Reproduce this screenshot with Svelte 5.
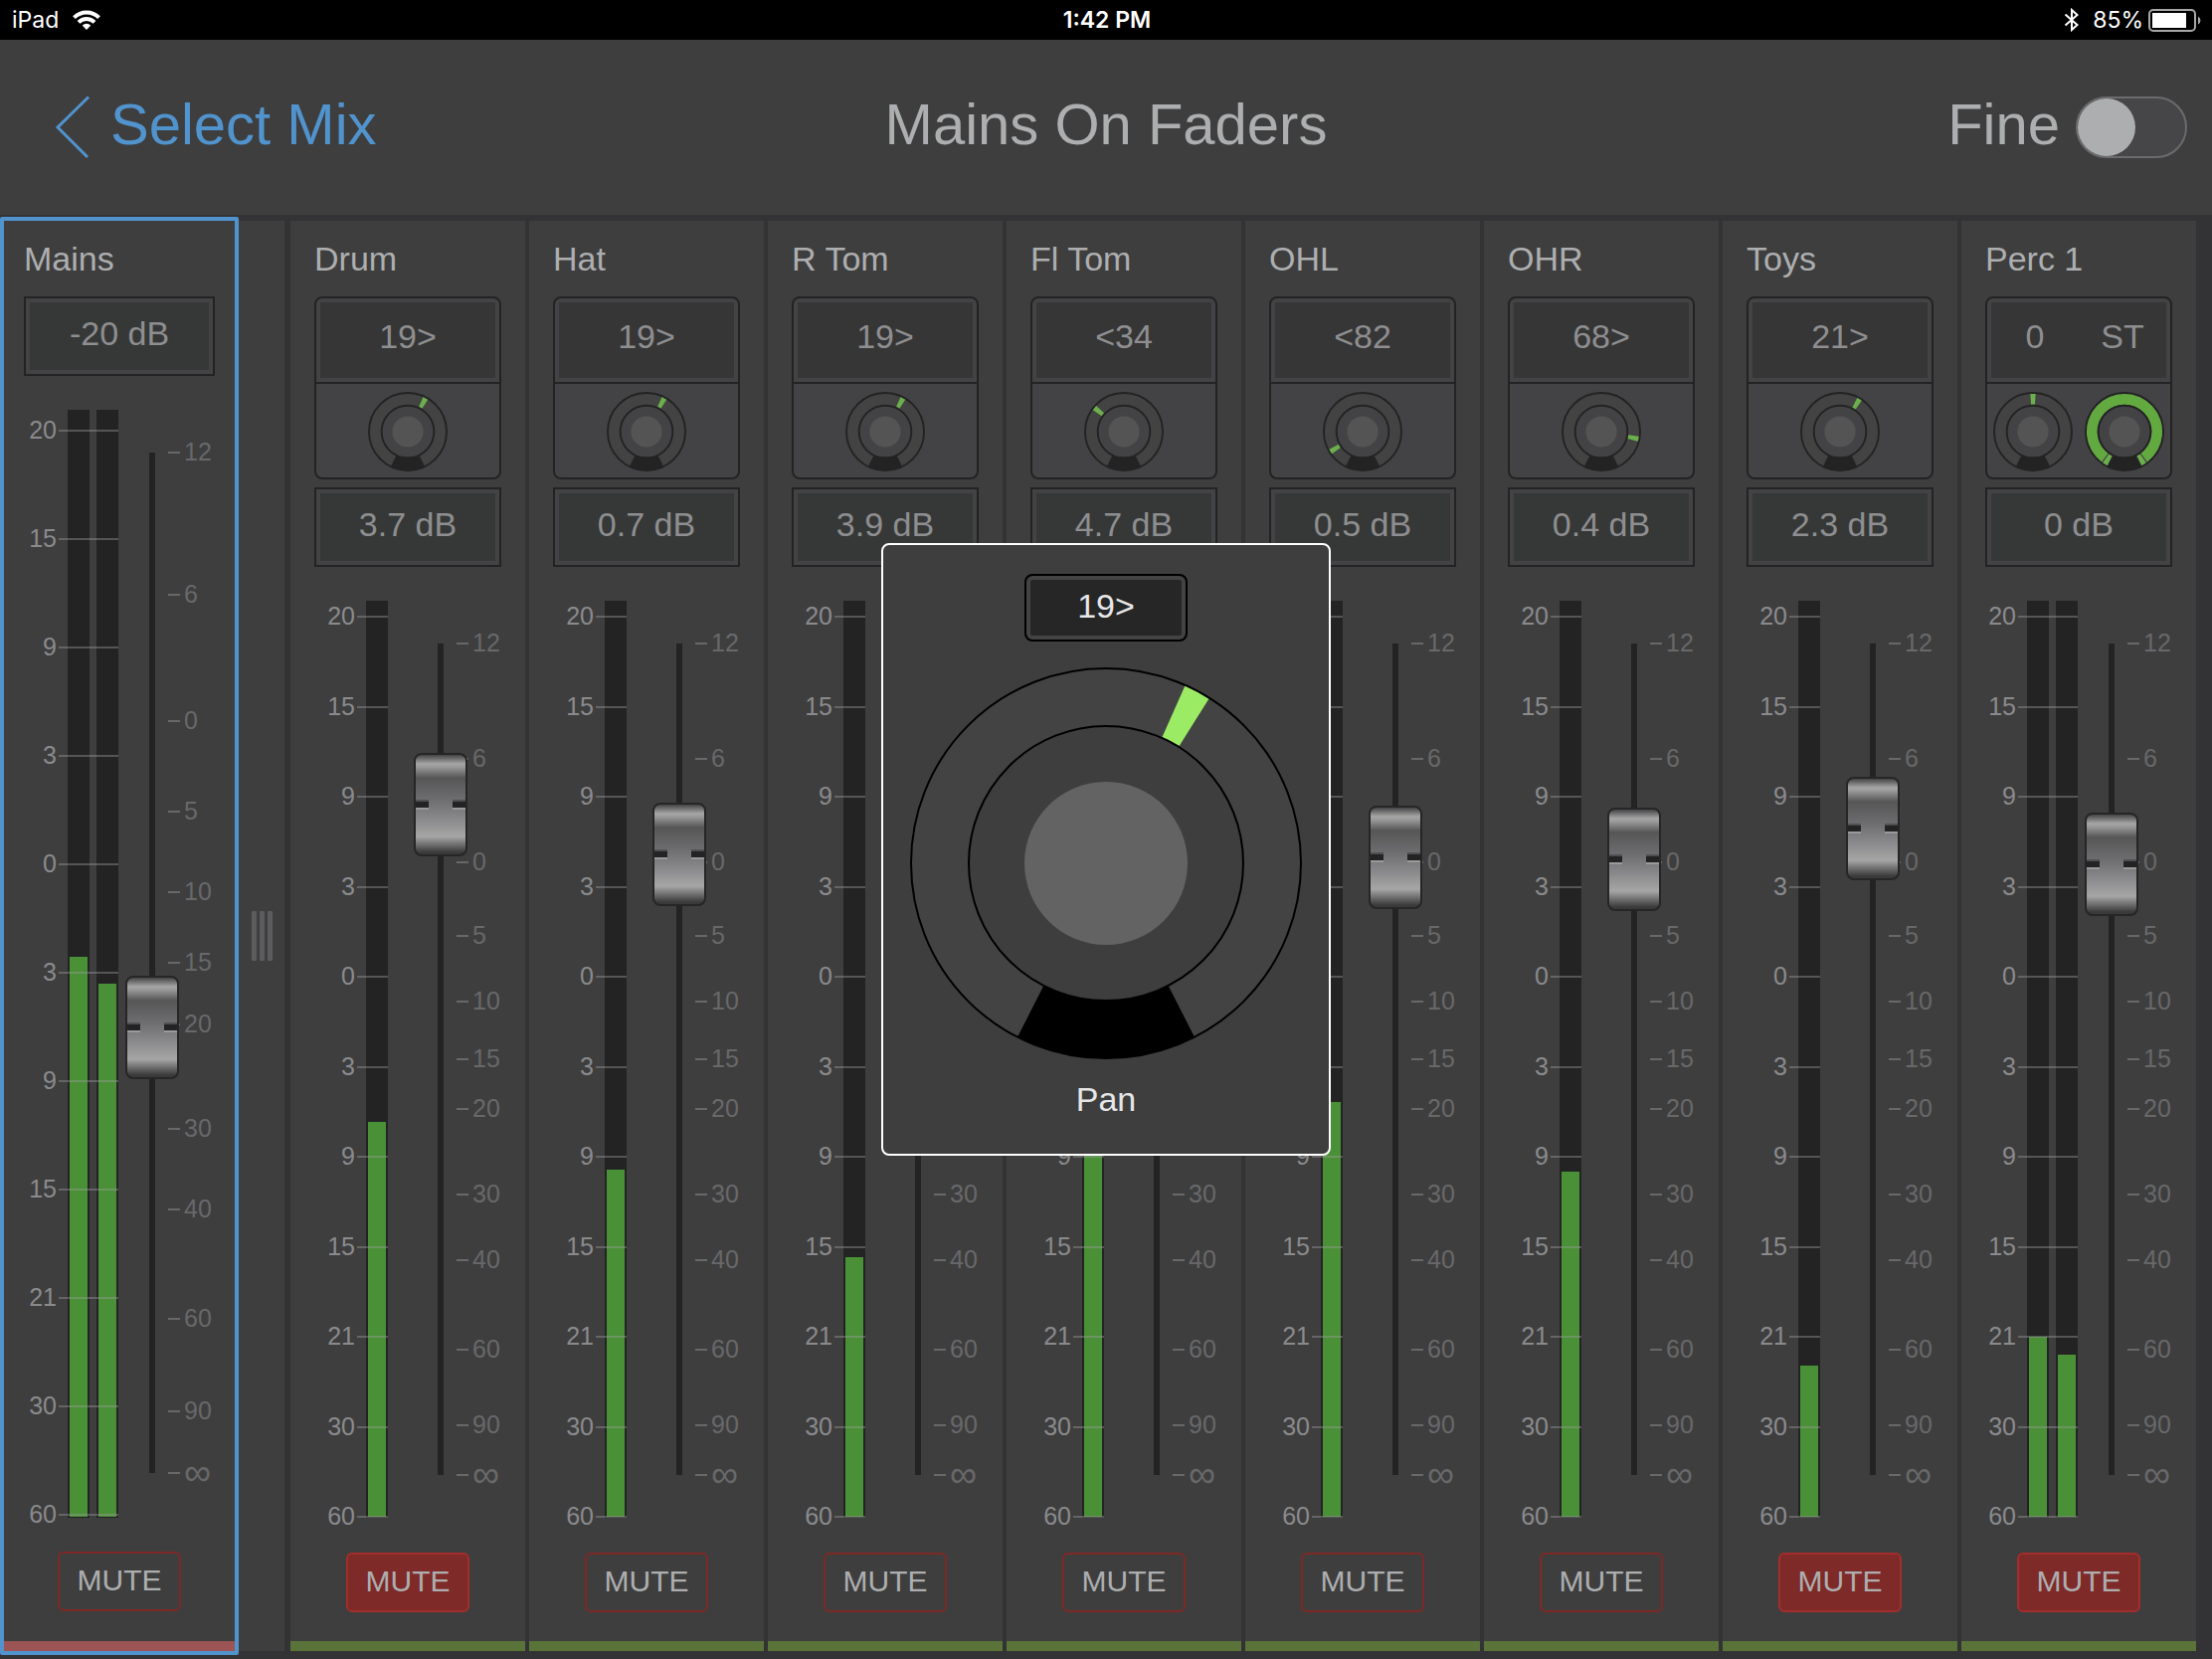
<script lang="ts">
  type Knob = { text: string; angle: number; spread?: boolean };
  type Strip = {
    name: string;
    gain: string;
    knobs: Knob[];
    levels: number[];
    fader: number;
    muted: boolean;
  };

  const meterMarks = ['20', '15', '9', '3', '0', '3', '9', '15', '21', '30', '60'];

  // label and the distance to the next mark, in thousandths of the travel
  const faderMarks = [
    { label: '12', grow: 139 },
    { label: '6', grow: 124 },
    { label: '0', grow: 89 },
    { label: '5', grow: 79 },
    { label: '10', grow: 69 },
    { label: '15', grow: 60 },
    { label: '20', grow: 103 },
    { label: '30', grow: 79 },
    { label: '40', grow: 107 },
    { label: '60', grow: 91 },
    { label: '90', grow: 60 },
    { label: '∞', grow: 0 }
  ];

  let mains = $state<Strip>({
    name: 'Mains', gain: '-20 dB', knobs: [], levels: [50.6, 48.2], fader: 437, muted: false
  });

  let strips = $state<Strip[]>([
    { name: 'Drum', gain: '3.7 dB', knobs: [{ text: '19>', angle: 28 }], levels: [43.1], fader: 806, muted: true },
    { name: 'Hat', gain: '0.7 dB', knobs: [{ text: '19>', angle: 28 }], levels: [37.9], fader: 746, muted: false },
    { name: 'R Tom', gain: '3.9 dB', knobs: [{ text: '19>', angle: 28 }], levels: [28.3], fader: 809, muted: false },
    { name: 'Fl Tom', gain: '4.7 dB', knobs: [{ text: '<34', angle: -51 }], levels: [50], fader: 824, muted: false },
    { name: 'OHL', gain: '0.5 dB', knobs: [{ text: '<82', angle: -122 }], levels: [45.3], fader: 743, muted: false },
    { name: 'OHR', gain: '0.4 dB', knobs: [{ text: '68>', angle: 101 }], levels: [37.7], fader: 741, muted: false },
    { name: 'Toys', gain: '2.3 dB', knobs: [{ text: '21>', angle: 31 }], levels: [16.5], fader: 778, muted: true },
    {
      name: 'Perc 1',
      gain: '0 dB',
      knobs: [{ text: '0', angle: 0 }, { text: 'ST', angle: 149, spread: true }],
      levels: [19.7, 17.7],
      fader: 734,
      muted: true
    }
  ]);

  let fine = $state(false);

  function point(r: number, deg: number) {
    const a = (deg * Math.PI) / 180;
    return `${(r * Math.sin(a)).toFixed(2)} ${(-r * Math.cos(a)).toFixed(2)}`;
  }

  function wedge(inner: number, outer: number, from: number, to: number) {
    const large = to - from > 180 ? 1 : 0;
    return `M${point(outer, from)}A${outer} ${outer} 0 ${large} 1 ${point(outer, to)}L${point(inner, to)}A${inner} ${inner} 0 ${large} 0 ${point(inner, from)}Z`;
  }
</script>

{#snippet dial(knob: Knob)}
  <svg class="dial" viewBox="-41 -41 82 82" aria-hidden="true">
    <circle class="ring" r="40" />
    {#if knob.spread}
      <path class="spread" d={wedge(28, 39, -143, 143)} />
      <path class="pointer" d={wedge(28, 39, -153, -145)} />
      <path class="pointer" d={wedge(28, 39, 145, 153)} />
    {:else}
      <path class="pointer" d={wedge(28, 39, knob.angle - 4, knob.angle + 4)} />
    {/if}
    <path class="stop" d={wedge(27, 40, 154, 206)} />
    <circle class="core" r="27" />
    <circle class="cap" r="16" />
  </svg>
{/snippet}

{#snippet channel(strip: Strip, main: boolean)}
  <section class="strip" class:main aria-label={strip.name}>
    <h2>{strip.name}</h2>

    {#if strip.knobs.length}
      <div class="pan">
        <div class="pan-values">
          {#each strip.knobs as knob}<span>{knob.text}</span>{/each}
        </div>
        <div class="pan-dials">
          {#each strip.knobs as knob}{@render dial(knob)}{/each}
        </div>
      </div>
    {/if}

    <output class="gain">{strip.gain}</output>

    <div class="console">
      <div class="meter" class:stereo={strip.levels.length > 1}>
        <div class="bars">
          {#each strip.levels as level}
            <div class="bar"><div class="level" style="height: {level}%"></div></div>
          {/each}
        </div>
        <div class="marks">
          {#each meterMarks as mark}
            <div class="mark"><span>{mark}</span></div>
          {/each}
        </div>
      </div>

      <input class="fader" type="range" min="0" max="1000" aria-label="{strip.name} level" bind:value={strip.fader} />

      <div class="scale">
        {#each faderMarks as mark}
          <div class="step" style="flex-grow: {mark.grow}">
            <span class:infinity={mark.label === '∞'}>{mark.label}</span>
          </div>
        {/each}
      </div>
    </div>

    <button class="mute" class:muted={strip.muted} aria-pressed={strip.muted} onclick={() => (strip.muted = !strip.muted)}>
      MUTE
    </button>
    <div class="colour"></div>
  </section>
{/snippet}

<div class="screen">
  <div class="status">
    <div class="status-side">
      <span>iPad</span>
      <svg width="28" height="20" viewBox="0 0 28 20" aria-hidden="true">
        <g fill="none" stroke="#fff" stroke-width="4">
          <path d="M1.5 7.6a17.8 17.8 0 0 1 25 0" />
          <path d="M6 12.4a11.4 11.4 0 0 1 16 0" />
        </g>
        <path d="M14 20l-4.3-4.6a6.2 6.2 0 0 1 8.6 0z" fill="#fff" />
      </svg>
    </div>
    <strong>1:42 PM</strong>
    <div class="status-side end">
      <svg class="bluetooth" width="16" height="24" viewBox="0 0 16 24" aria-hidden="true">
        <path d="M1.500 6.500l12 10.500L8 22V2l5.500 5L1.500 17.500" fill="none" stroke="#fff" stroke-width="2" />
      </svg>
      <span>85%</span>
      <svg width="54" height="24" viewBox="0 0 54 24" aria-hidden="true">
        <rect x="1" y="2" width="46" height="21" rx="4" fill="none" stroke="#a8a8a8" stroke-width="2" />
        <rect x="4" y="5" width="34" height="15" fill="#fff" />
        <path d="M50 8.500a4.500 4.500 0 0 1 0 8z" fill="#a8a8a8" />
      </svg>
    </div>
  </div>

  <main>
    <header>
      <button class="back">
        <svg width="36" height="64" viewBox="0 0 36 64" aria-hidden="true">
          <path d="M34 1.500L3 32l30 30" fill="none" stroke="currentColor" stroke-width="3" />
        </svg>
        <span>Select Mix</span>
      </button>
      <h1>Mains On Faders</h1>
      <label class="fine">
        <span>Fine</span>
        <input type="checkbox" role="switch" bind:checked={fine} />
      </label>
    </header>

    <div class="desk">
      {@render channel(mains, true)}
      <div class="grip"><i></i><i></i><i></i></div>
      <div class="channels">
        {#each strips as strip}
          {@render channel(strip, false)}
        {/each}
      </div>
    </div>

    <div class="popup" role="dialog" aria-label="Pan">
      <output>19&gt;</output>
      <svg class="big-dial" viewBox="-197 -197 394 394" aria-hidden="true">
        <circle class="ring" r="196" />
        <path class="pointer" d={wedge(139, 195, 24, 32)} />
        <path class="stop" d={wedge(138, 196, 153, 207)} />
        <circle class="core" r="138" />
        <circle class="cap" r="82" />
      </svg>
      <p>Pan</p>
    </div>
  </main>
</div>

<style>
  :global(body) {
    margin: 0;
    background: #333335;
  }

  .screen {
    display: flex;
    flex-direction: column;
    min-height: 100vh;
    background: #333335;
    color: #adaeb0;
    font-family: 'Liberation Sans', Arial, sans-serif;
    font-size: 34px;
  }

  .status {
    display: grid;
    grid-template-columns: 1fr auto 1fr;
    align-items: center;
    height: 40px;
    padding: 0 10px 0 12px;
    background: #000;
    color: #fff;
    font-family: Inter, Roboto, sans-serif;
    font-size: 23px;
  }

  .status strong {
    font-weight: 600;
  }

  .status-side {
    display: flex;
    align-items: center;
    gap: 14px;
  }

  .status-side.end {
    justify-content: flex-end;
    gap: 5px;
  }

  .bluetooth {
    margin-right: 8px;
  }

  main {
    position: relative;
    flex: 1;
    display: flex;
    flex-direction: column;
  }

  header {
    display: grid;
    grid-template-columns: 1fr auto 1fr;
    align-items: center;
    height: 176px;
    padding: 0 25px;
    box-sizing: border-box;
    background: #3e3e3e;
    font-size: 58px;
    line-height: 64px;
  }

  header h1,
  header span {
    margin: 0;
    padding-bottom: 6px;
    font-size: 58px;
    font-weight: 400;
  }

  .back {
    display: flex;
    align-items: center;
    justify-self: start;
    gap: 20px;
    margin-left: 30px;
    padding: 0;
    border: 0;
    background: none;
    color: #5193cd;
    font: inherit;
    cursor: pointer;
  }

  .fine {
    display: flex;
    align-items: center;
    justify-self: end;
    gap: 16px;
  }

  .fine input {
    appearance: none;
    display: flex;
    width: 112px;
    height: 62px;
    margin: 0;
    box-sizing: border-box;
    border: 2px solid #6b6b6e;
    border-radius: 31px;
    background: #464648;
    cursor: pointer;
  }

  .fine input::before {
    content: '';
    width: 58px;
    height: 58px;
    border-radius: 50%;
    background: #adaeb0;
  }

  .fine input:checked {
    justify-content: flex-end;
  }

  .desk {
    flex: 1;
    display: flex;
    padding: 6px 16px 8px 0;
  }

  .channels {
    flex: 1;
    display: flex;
    gap: 4px;
    margin-left: 6px;
  }

  .strip {
    flex: 1 1 0;
    display: flex;
    flex-direction: column;
    min-width: 0;
    background: #3e3e3e;
  }

  .strip.main {
    flex: 0 0 232px;
    margin: -4px 0;
    border: 4px solid #5193cd;
    border-radius: 2px;
  }

  .strip > * {
    margin-left: 24px;
    margin-right: 24px;
  }

  .strip.main > * {
    margin-left: 20px;
    margin-right: 20px;
  }

  h2 {
    margin-top: 0;
    margin-bottom: 0;
    font-size: 34px;
    font-weight: 400;
    line-height: 76px;
    white-space: nowrap;
  }

  .grip {
    display: flex;
    align-items: center;
    justify-content: center;
    gap: 3px;
    width: 46px;
    background: #3e3e3e;
  }

  .grip i {
    width: 5px;
    height: 50px;
    border-radius: 1px;
    background: #5c5c5e;
  }

  .pan {
    margin-bottom: 8px;
    border: 2px solid #232324;
    border-radius: 8px;
    background: #434345;
    overflow: hidden;
  }

  .pan-values {
    display: flex;
    height: 76px;
    padding-bottom: 8px;
    box-sizing: border-box;
    margin: 4px;
    background: #363636;
    color: #8e8e90;
    line-height: 68px;
  }

  .pan-values span {
    flex: 1;
    text-align: center;
  }

  .pan-dials {
    display: flex;
    justify-content: center;
    align-items: center;
    gap: 12px;
    height: 96px;
    padding-top: 2px;
    box-sizing: border-box;
    border-top: 2px solid #232324;
  }

  .dial {
    width: 80px;
    height: 80px;
  }

  .ring {
    fill: #434343;
    stroke: #232324;
    stroke-width: 2;
  }

  .core {
    fill: #434345;
    stroke: #232324;
    stroke-width: 2;
  }

  .cap {
    fill: #545454;
  }

  .pointer {
    fill: #6bb04c;
  }

  .spread {
    fill: #62a940;
  }

  .stop {
    fill: #232324;
  }

  .gain {
    height: 80px;
    padding-bottom: 6px;
    box-sizing: border-box;
    border: 2px solid #232324;
    background: #363837;
    box-shadow: inset 0 0 0 4px #434345;
    color: #8e8e90;
    line-height: 70px;
    text-align: center;
  }

  .console {
    flex: 1;
    display: flex;
    margin-top: 34px;
    margin-bottom: 35px;
    min-height: 600px;
  }

  .main .console {
    margin-bottom: 34px;
  }

  .meter {
    --label: 41px;
    --bars: 22px;
    display: grid;
    grid-template-columns: var(--label) var(--bars);
    column-gap: 11px;
    flex: 0 0 100px;
  }

  .meter.stereo {
    --label: 31px;
    --bars: 51px;
  }

  .main .meter.stereo {
    --label: 33px;
    flex-basis: 102px;
  }

  .bars {
    grid-area: 1 / 2;
    display: flex;
    gap: 7px;
  }

  .bar {
    flex: 1;
    display: flex;
    align-items: flex-end;
    padding: 0 2px 1px;
    background: #232324;
  }

  .level {
    flex: 1;
    background: #4a9036;
  }

  .marks {
    grid-area: 1 / 1 / 2 / 3;
    display: flex;
    flex-direction: column;
    justify-content: space-between;
    margin: 4px 0 -11px;
  }

  .main .marks {
    margin: 9px 0 -9px;
  }

  .mark {
    display: flex;
    align-items: center;
    gap: 2px;
    height: 24px;
    color: #8a8a8d;
    font-size: 25px;
    line-height: 22px;
  }

  .mark span {
    width: var(--label);
    padding-bottom: 2px;
    text-align: right;
  }

  .mark::after {
    content: '';
    flex: 1;
    height: 2px;
    background: rgba(160, 160, 163, 0.4);
  }

  .fader {
    appearance: none;
    writing-mode: vertical-lr;
    direction: rtl;
    align-self: stretch;
    width: 54px;
    height: auto;
    margin: -9px 0;
    background: linear-gradient(#232324, #232324) center / 6px calc(100% - 104px) no-repeat;
    z-index: 1;
  }

  .main .fader {
    margin-bottom: -7px;
  }

  .fader::-webkit-slider-thumb {
    appearance: none;
    width: 54px;
    height: 104px;
    border: 2px solid #262627;
    border-radius: 8px;
    background:
      linear-gradient(#505052 2px, #232324 2px 8px, #9a9a9c 8px) left center / 13px 10px no-repeat,
      linear-gradient(#505052 2px, #232324 2px 8px, #9a9a9c 8px) right center / 13px 10px no-repeat,
      linear-gradient(#454547, #a6a6a6 9%, #9a9a9a 12%, #565657 23%, #6c6c6e 44%, #8c8c8e 66%, #a6a6a6 82%, #3a3a3b 98%);
  }

  .scale {
    display: flex;
    flex-direction: column;
    width: 45px;
    margin: 43px 0 43px -11px;
    color: #68686a;
    font-size: 25px;
    line-height: 24px;
  }

  .main .scale {
    margin-bottom: 45px;
  }

  .step {
    flex: 0 1 0;
    display: flex;
    align-items: flex-start;
    gap: 4px;
    height: 0;
  }

  .step::before {
    content: '';
    width: 12px;
    height: 2px;
    margin-top: -1px;
    background: #68686a;
  }

  .step span {
    margin-top: -13px;
  }

  .step .infinity {
    font-size: 38px;
  }

  .mute {
    align-self: center;
    width: 124px;
    height: 60px;
    padding: 0 0 2px;
    border: 2px solid #7e2826;
    border-radius: 6px;
    background: none;
    color: #adaeb0;
    font: inherit;
    font-size: 30px;
    cursor: pointer;
  }

  .mute.muted {
    border-color: #a32d2b;
    background: #7e2a28;
  }

  .strip > .colour {
    height: 10px;
    margin: 29px 0 0;
    background: #597338;
  }

  .strip.main > .colour {
    margin: 30px 0 0;
    background: #9c5454;
  }

  .popup {
    position: absolute;
    top: 50%;
    left: 50%;
    transform: translate(-50%, -50%);
    z-index: 2;
    display: flex;
    flex-direction: column;
    align-items: center;
    width: 452px;
    height: 616px;
    padding-top: 29px;
    box-sizing: border-box;
    border: 2px solid #fff;
    border-radius: 8px;
    background: #3e3e3e;
    color: #e6e6e8;
  }

  .popup output {
    width: 164px;
    height: 68px;
    padding-bottom: 4px;
    box-sizing: border-box;
    border: 2px solid #000;
    border-radius: 8px;
    background: #262626;
    box-shadow: inset 0 0 0 4px #434343;
    line-height: 60px;
    text-align: center;
  }

  .popup p {
    margin: 20px 0 0;
    line-height: 40px;
  }

  .big-dial {
    width: 394px;
    height: 394px;
    margin-top: 26px;
  }

  .big-dial .ring {
    stroke: #000;
  }

  .big-dial .core {
    fill: #3e3e3e;
    stroke: #000;
  }

  .big-dial .cap {
    fill: #636363;
  }

  .big-dial .pointer {
    fill: #9beb64;
  }

  .big-dial .stop {
    fill: #000;
  }
</style>
